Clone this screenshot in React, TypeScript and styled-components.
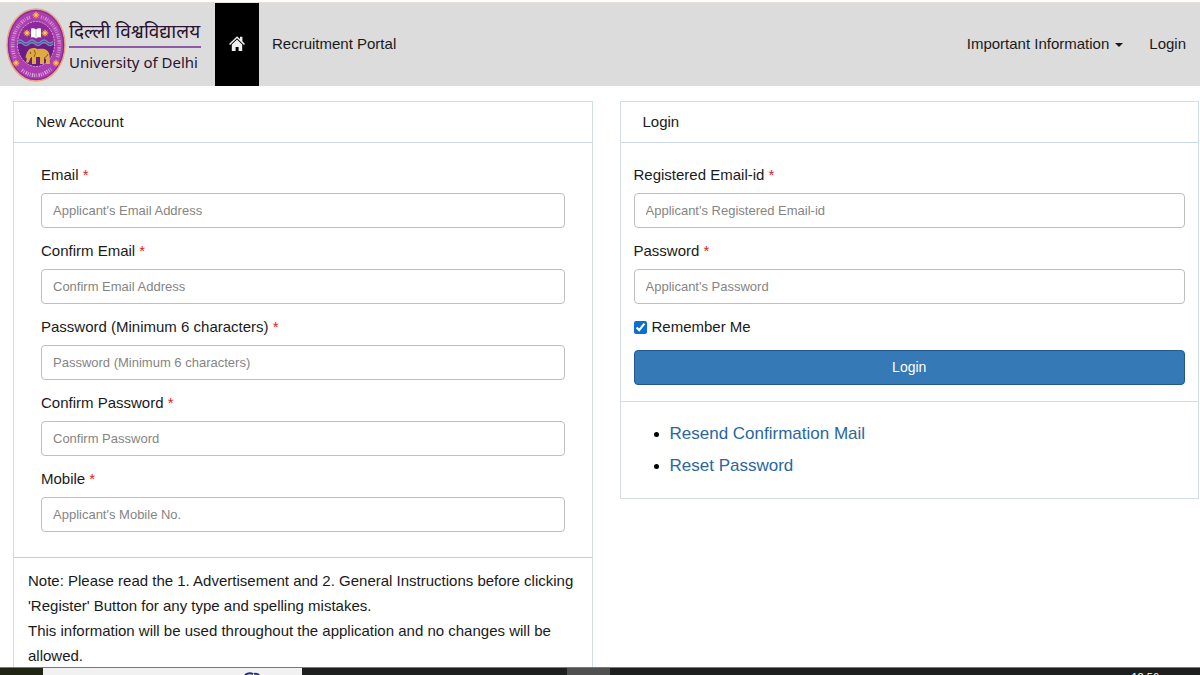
import React from "react";
import styled, { createGlobalStyle } from "styled-components";

const GlobalStyle = createGlobalStyle`
  *, *::before, *::after { box-sizing: border-box; }
  html, body { margin: 0; height: 100%; }
  body {
    overflow: hidden;
    background: #fff;
    color: #1a1a1a;
    font-family: "Liberation Sans", Arial, sans-serif;
    font-size: 15px;
    line-height: 25px;
  }
`;

const NavBar = styled.header`
  display: flex;
  align-items: stretch;
  height: 84px;
  margin-top: 2px;
  padding-right: 14px;
  background: #dcdcdc;
  border-top: 1px solid #eadfd6;
`;

const Brand = styled.a`
  display: flex;
  align-items: center;
  gap: 3px;
  width: 215px;
  padding-left: 6px;
  color: #2b1230;
  text-decoration: none;
`;

const BrandText = styled.span`
  display: flex;
  flex-direction: column;
  width: 132px;
  white-space: nowrap;
`;

const HindiName = styled.span`
  padding-top: 8px;
  border-bottom: 2px solid #8e5aa8;
  font-family: "Noto Sans Devanagari", "Noto Sans", sans-serif;
  font-size: 19px;
  line-height: 24px;
`;

const EnglishName = styled.span`
  font-family: "Noto Sans", sans-serif;
  font-size: 15px;
  line-height: 28px;
`;

const HomeLink = styled.a`
  display: flex;
  align-items: center;
  justify-content: center;
  width: 44px;
  padding-bottom: 2px;
  background: #000;
`;

const NavLink = styled.a`
  align-self: center;
  padding: 0 0 2px 13px;
  color: #1a1a1a;
  text-decoration: none;
`;

const NavEnd = styled.nav`
  display: flex;
  align-items: center;
  gap: 13px;
  margin-left: auto;
`;

const MenuButton = styled.button`
  display: flex;
  align-items: center;
  gap: 6px;
  padding: 0 0 2px;
  border: 0;
  background: none;
  color: #1a1a1a;
  font: inherit;
  cursor: pointer;

  &::after {
    content: "";
    margin-top: 2px;
    border: 4px solid transparent;
    border-top-color: #1a1a1a;
    border-bottom: 0;
  }
`;

const Columns = styled.main`
  display: grid;
  grid-template-columns: 1fr 1fr;
  align-items: start;
  gap: 27px;
  padding: 15px 1px 0 13px;
`;

const Card = styled.section`
  border: 1px solid #d2dde3;
`;

const CardTitle = styled.h2`
  margin: 0;
  padding: 7px 22px 8px;
  border-bottom: 1px solid #c9d8e2;
  font-size: 15px;
  font-weight: 400;
  line-height: 25px;
`;

const FieldList = styled.form<{ $inset: number; $bottom: number }>`
  display: flex;
  flex-direction: column;
  gap: 10px;
  padding: 19px ${(p) => p.$inset}px ${(p) => p.$bottom}px;
`;

const Field = styled.label`
  display: flex;
  flex-direction: column;
  gap: 6px;
`;

const Required = styled.span`
  color: #e02020;
`;

const TextInput = styled.input`
  width: 100%;
  height: 35px;
  padding: 0 11px;
  border: 1px solid #bfbfbf;
  border-radius: 4px;
  background: #fff;
  color: #444;
  font: inherit;
  font-size: 13px;

  &::placeholder { color: #858585; opacity: 1; }
`;

const Remember = styled.label`
  display: flex;
  align-items: center;
  gap: 5px;
  line-height: 26px;
`;

const Tick = styled.input`
  width: 13px;
  height: 13px;
  margin: 0;
  accent-color: #0b6fd0;
`;

const SubmitButton = styled.button`
  height: 35px;
  border: 1px solid #22598c;
  border-radius: 4px;
  background: #3579b7;
  color: #fff;
  font: inherit;
  font-size: 14px;
  cursor: pointer;
`;

const Note = styled.p`
  margin: 0;
  padding: 10px 14px 24px;
  border-top: 1px solid #bfd2e0;
`;

const LinkList = styled.ul`
  margin: 0;
  padding: 16px 14px 16px 49px;
  border-top: 1px solid #cfdce6;
  color: #000;
  line-height: 32px;
`;

const HelpLink = styled.a`
  color: #2a66a0;
  font-size: 17px;
  text-decoration: none;
`;

const Taskbar = styled.footer`
  position: fixed;
  inset: auto 0 0 0;
  display: flex;
  height: 8px;
  overflow: hidden;
  background: #1e201f;
  border-top: 1px solid #77797a;
`;

const StartArea = styled.div`
  width: 43px;
  background: #1f2413;
`;

const SearchArea = styled.div`
  display: flex;
  justify-content: flex-end;
  width: 259px;
  padding-right: 42px;
  background: #f1f1f1;
`;

const ActiveApp = styled.div`
  width: 43px;
  margin-left: 265px;
  background: #505050;
`;

const Clock = styled.time`
  margin: 3px 41px 0 auto;
  color: #fff;
  font-size: 11px;
  line-height: 12px;
`;

const Star = ({ x, y }: { x: number; y: number }) => (
  <g transform={`translate(${x} ${y})`}>
    <circle r="2.6" fill="#f08a3c" />
    <path d="M0-3.4V3.4M-3.4 0H3.4M-2.4-2.4L2.4 2.4M-2.4 2.4L2.4-2.4" stroke="#f6a54a" strokeWidth="1" />
    <circle r="1" fill="#ffd98a" />
  </g>
);

const Seal = () => (
  <svg width="60" height="74" viewBox="0 0 60 74" aria-hidden="true">
    <defs>
      <path id="seal-left" d="M9 50A23.500 29 0 0 1 25 9" />
      <path id="seal-right" d="M35 9A23.500 29 0 0 1 51 50" />
      <path id="seal-foot" d="M16 62Q30 73 45 61" />
      <clipPath id="seal-core"><ellipse cx="30" cy="36" rx="18" ry="22" /></clipPath>
    </defs>
    <ellipse cx="30" cy="37" rx="29" ry="36" fill="#ab3fb0" stroke="#e9a47c" strokeWidth="1.4" />
    <ellipse cx="30" cy="37" rx="27.6" ry="34.4" fill="none" stroke="#7b2a92" strokeWidth="1" />
    <g fill="none" stroke="#efcdea" strokeWidth="3.6" strokeDasharray="1 1.2 .7 1.4 1.4 1">
      <use href="#seal-left" strokeOpacity=".6" />
      <use href="#seal-right" strokeOpacity=".6" />
      <use href="#seal-foot" strokeOpacity=".75" />
    </g>
    <ellipse cx="30" cy="36" rx="18.5" ry="22.5" fill="#8a2a9c" stroke="#dba0cd" strokeWidth="1" strokeDasharray="2 1" />
    <g clipPath="url(#seal-core)">
      <path d="M10 36H50V60H10Z" fill="#6c1c86" />
      <path d="M11 33.500q3-3 6 0t6 0 6 0 6 0 6 0 6 0M11 36q3-3 6 0t6 0 6 0 6 0 6 0 6 0" fill="none" stroke="#6a8fb8" strokeWidth="1.5" />
    </g>
    <path d="M25 20.500q3-1 5 1 2-2 5-1v9q-3-1-5 1-2-2-5-1z" fill="#fff" />
    <path d="M30 21.500v8" stroke="#b5a3c4" strokeWidth=".7" />
    <path d="M19.500 50c1-6 3-10 8-10 2 0 3 .5 4 1 6-1 11 0 12 6 .6 3 0 6 .5 9h-4v-5l-2-1v6h-4v-7h-4v7h-4v-7c-2 0-2 4-4 6l-2-1c1-3 1-5-.5-4z" fill="#e0aa42" />
    <path d="M28 42q3 3 0 7M38 50q3-1 4-4" fill="none" stroke="#8b5820" strokeWidth="1" />
    <circle cx="24.500" cy="45" r=".7" fill="#4c2a12" />
    <Star x={30} y={7} />
    <Star x={21} y={25} />
    <Star x={39} y={25} />
    <Star x={10} y={55} />
    <Star x={50} y={55} />
  </svg>
);

const HomeIcon = () => (
  <svg width="16" height="15" viewBox="0 0 16 15" aria-hidden="true">
    <path d="M8 .3l3 2.800V.8h2.400v4.500L16 8l-1 1-7-6.700L1 9 0 8z" fill="#eee" />
    <path d="M8 3.600l5.200 5V15H9.600v-4H6.600v4H2.800V8.600z" fill="#eee" />
  </svg>
);

const accountFields = [
  { label: "Email", hint: "Applicant's Email Address", type: "email" },
  { label: "Confirm Email", hint: "Confirm Email Address", type: "email" },
  { label: "Password (Minimum 6 characters)", hint: "Password (Minimum 6 characters)", type: "password" },
  { label: "Confirm Password", hint: "Confirm Password", type: "password" },
  { label: "Mobile", hint: "Applicant's Mobile No.", type: "tel" },
];

const loginFields = [
  { label: "Registered Email-id", hint: "Applicant's Registered Email-id", type: "email" },
  { label: "Password", hint: "Applicant's Password", type: "password" },
];

const Fields = ({ items }: { items: typeof accountFields }) => (
  <>
    {items.map((f) => (
      <Field key={f.label}>
        <span>{f.label} <Required>*</Required></span>
        <TextInput type={f.type} placeholder={f.hint} />
      </Field>
    ))}
  </>
);

export default function App() {
  return (
    <>
      <GlobalStyle />
      <NavBar>
        <Brand href="#">
          <Seal />
          <BrandText>
            <HindiName lang="hi">दिल्ली विश्वविद्यालय</HindiName>
            <EnglishName>University of Delhi</EnglishName>
          </BrandText>
        </Brand>
        <HomeLink href="#" aria-label="Home"><HomeIcon /></HomeLink>
        <NavLink href="#">Recruitment Portal</NavLink>
        <NavEnd>
          <MenuButton type="button">Important Information</MenuButton>
          <NavLink href="#">Login</NavLink>
        </NavEnd>
      </NavBar>
      <Columns>
        <Card>
          <CardTitle>New Account</CardTitle>
          <FieldList $inset={27} $bottom={25}>
            <Fields items={accountFields} />
          </FieldList>
          <Note>
            Note: Please read the 1. Advertisement and 2. General Instructions before clicking 'Register' Button for any
            type and spelling mistakes.
            <br />
            This information will be used throughout the application and no changes will be allowed.
          </Note>
        </Card>
        <Card>
          <CardTitle>Login</CardTitle>
          <FieldList $inset={13} $bottom={16}>
            <Fields items={loginFields} />
            <Remember>
              <Tick type="checkbox" defaultChecked />
              Remember Me
            </Remember>
            <SubmitButton type="button">Login</SubmitButton>
          </FieldList>
          <LinkList>
            <li><HelpLink href="#">Resend Confirmation Mail</HelpLink></li>
            <li><HelpLink href="#">Reset Password</HelpLink></li>
          </LinkList>
        </Card>
      </Columns>
      <Taskbar>
        <StartArea />
        <SearchArea>
          <svg width="16" height="7" viewBox="0 0 16 7" aria-hidden="true">
            <path d="M1 7q4-3 8-1M10 6q3-1 5 1" fill="none" stroke="#26307c" strokeWidth="2" />
          </svg>
        </SearchArea>
        <ActiveApp />
        <Clock>12:56</Clock>
      </Taskbar>
    </>
  );
}
